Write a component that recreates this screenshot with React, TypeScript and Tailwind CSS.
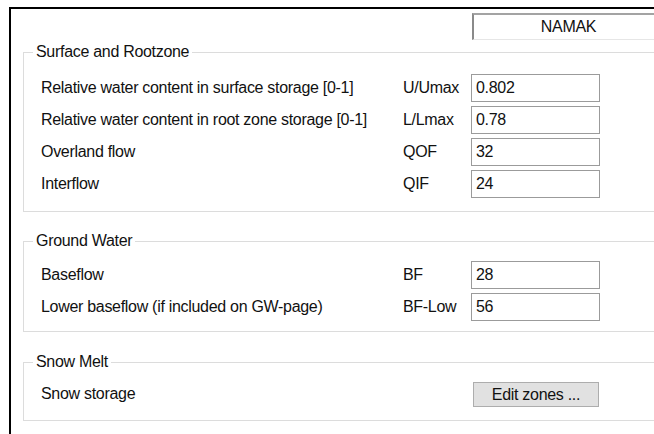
import React from "react";

type Row = { label: string; code: string; value: string };

const surfaceRows: Row[] = [
  { label: "Relative water content in surface storage [0-1]", code: "U/Umax", value: "0.802" },
  { label: "Relative water content in root zone storage [0-1]", code: "L/Lmax", value: "0.78" },
  { label: "Overland flow", code: "QOF", value: "32" },
  { label: "Interflow", code: "QIF", value: "24" },
];

const groundRows: Row[] = [
  { label: "Baseflow", code: "BF", value: "28" },
  { label: "Lower baseflow (if included on GW-page)", code: "BF-Low", value: "56" },
];

function Field({ label, code, value }: Row) {
  return (
    <div className="grid h-[32px] grid-cols-[362px_68px_129px] items-center">
      <span className="whitespace-nowrap">{label}</span>
      <span>{code}</span>
      <div className="flex h-[28px] items-center border border-[#9b9b9b] bg-white pl-[4px]">
        {value}
      </div>
    </div>
  );
}

function Group({
  title,
  className,
  children,
}: {
  title: string;
  className: string;
  children: React.ReactNode;
}) {
  return (
    <fieldset className={`w-[660px] border border-[#dcdcdc] ${className}`}>
      <legend className="ml-[9px] px-[3px] leading-[16px]">{title}</legend>
      <div className="pl-[17px]">{children}</div>
    </fieldset>
  );
}

export default function App() {
  return (
    <div
      className="h-[434px] w-[654px] overflow-hidden bg-white text-[16px] tracking-[-0.3px] text-[#111]"
      style={{ fontFamily: '"Liberation Sans", Arial, sans-serif' }}
    >
      <div className="ml-[9px] mt-[7px] h-[500px] w-[700px] border-l-2 border-t-2 border-black">
        {/* catchment name header */}
        <div className="ml-[461px] mt-[4px] flex h-[27px] w-[192px] items-center justify-center border-l-2 border-t-2 border-b border-r border-l-[#8a8a8a] border-t-[#a3a3a3] border-b-[#e6e6e6] border-r-[#e6e6e6] bg-white">
          NAMAK
        </div>

        <div className="ml-[12px] mt-[4px]">
          <Group title="Surface and Rootzone" className="pt-[12px] pb-[11px]">
            {surfaceRows.map((r) => (
              <Field key={r.code} {...r} />
            ))}
          </Group>

          <Group title="Ground Water" className="mt-[21px] pt-[10px] pb-[8px]">
            {groundRows.map((r) => (
              <Field key={r.code} {...r} />
            ))}
          </Group>

          <Group title="Snow Melt" className="mt-[22px] pt-[8px] pb-[10px]">
            <div className="grid h-[32px] grid-cols-[430px_129px] items-center">
              <span>Snow storage</span>
              <button className="ml-[2px] h-[25px] w-[126px] border border-[#adadad] bg-[#e1e1e1] text-[16px]">
                Edit zones ...
              </button>
            </div>
          </Group>
        </div>
      </div>
    </div>
  );
}
